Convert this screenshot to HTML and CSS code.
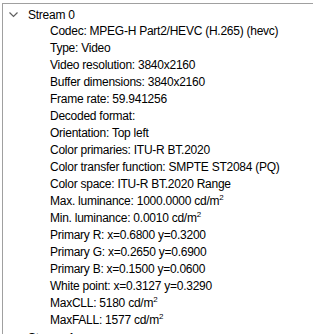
FILE: index.html
```html
<!DOCTYPE html>
<html lang="en">
<head>
    <meta charset="UTF-8">
    <title>Stream info</title>
    <link rel="stylesheet" href="styles.css">
</head>
<body>
    <div class="tree-panel">
        <ul class="tree">
            <li class="tree-node">
                <div class="tree-row">
                    <svg class="chevron" width="9" height="6" viewBox="0 0 9 6"><path d="M0.5 0.5 L4.5 4.5 L8.5 0.5" fill="none" stroke="#606060" stroke-width="1.2"/></svg>
                    <span>Stream 0</span>
                </div>
                <ul class="tree-children">
                    <li>Codec: MPEG-H Part2/HEVC (H.265) (hevc)</li>
                    <li>Type: Video</li>
                    <li>Video resolution: 3840x2160</li>
                    <li>Buffer dimensions: 3840x2160</li>
                    <li>Frame rate: 59.941256</li>
                    <li>Decoded format:</li>
                    <li>Orientation: Top left</li>
                    <li>Color primaries: ITU-R BT.2020</li>
                    <li>Color transfer function: SMPTE ST2084 (PQ)</li>
                    <li>Color space: ITU-R BT.2020 Range</li>
                    <li>Max. luminance: 1000.0000 cd/m<sup>2</sup></li>
                    <li>Min. luminance: 0.0010 cd/m<sup>2</sup></li>
                    <li>Primary R: x=0.6800 y=0.3200</li>
                    <li>Primary G: x=0.2650 y=0.6900</li>
                    <li>Primary B: x=0.1500 y=0.0600</li>
                    <li>White point: x=0.3127 y=0.3290</li>
                    <li>MaxCLL: 5180 cd/m<sup>2</sup></li>
                    <li>MaxFALL: 1577 cd/m<sup>2</sup></li>
                </ul>
            </li>
            <li class="tree-node">
                <div class="tree-row">
                    <svg class="chevron" width="9" height="6" viewBox="0 0 9 6"><path d="M0.5 0.5 L4.5 4.5 L8.5 0.5" fill="none" stroke="#606060" stroke-width="1.2"/></svg>
                    <span>Stream 1</span>
                </div>
            </li>
        </ul>
    </div>
</body>
</html>
```

FILE: styles.css
```css
body {
    margin: 0;
    background: #fff;
    font-family: "Liberation Sans", Arial, sans-serif;
    font-size: 12px;
    letter-spacing: -0.25px;
    color: #000;
}
.tree-panel {
    margin: 3px 0 0 2px;
    border-top: 1px solid #a0a0a0;
    border-left: 1px solid #a0a0a0;
    height: 331px;
    overflow: hidden;
}
.tree, .tree-children {
    list-style: none;
    margin: 0;
    padding: 0;
}
.tree {
    padding-top: 2px;
}
.tree-row {
    display: flex;
    align-items: center;
    height: 17px;
}
.chevron {
    margin-left: 6px;
    margin-right: 10px;
}
.tree-children li {
    height: 17px;
    line-height: 17px;
    padding-left: 47px;
    white-space: nowrap;
}
sup {
    font-size: 8px;
    line-height: 0;
    vertical-align: 5px;
}
```
